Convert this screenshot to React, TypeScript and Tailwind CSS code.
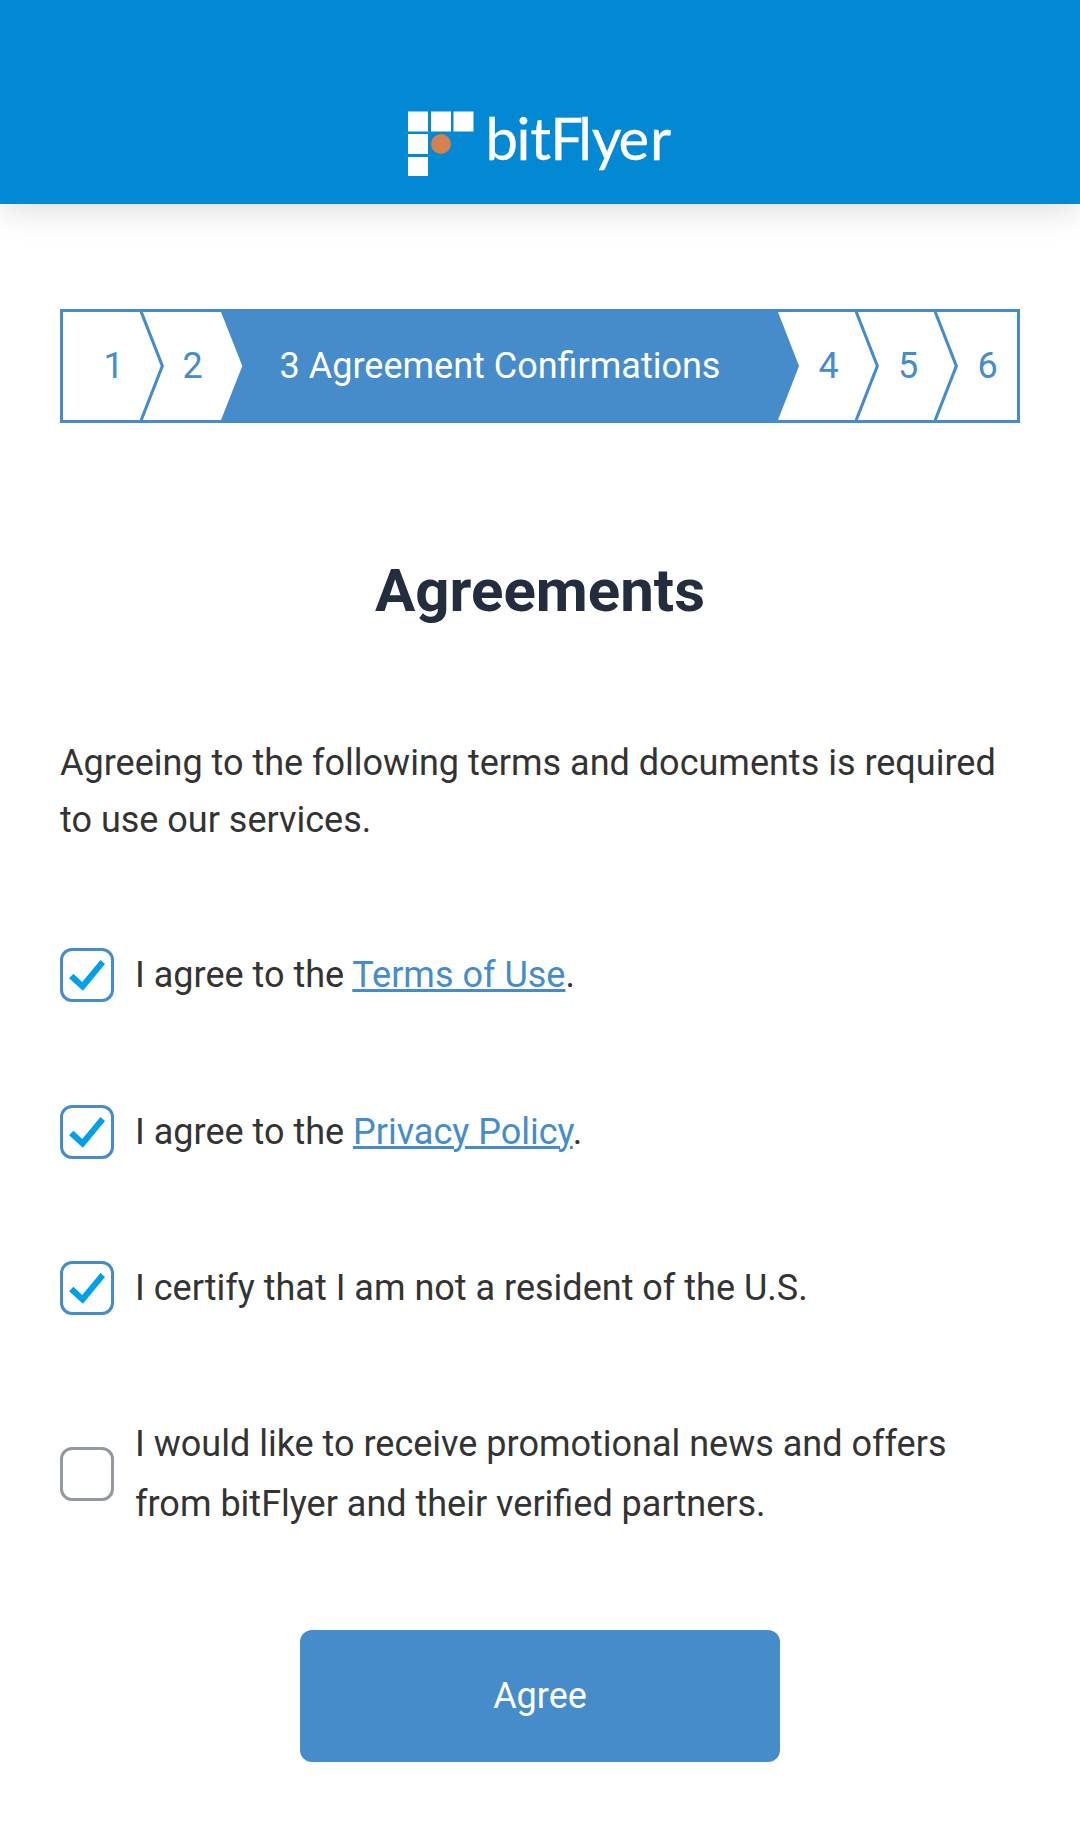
import type { ReactNode } from "react";

function Logo() {
  return (
    <svg width="270" height="72" viewBox="0 0 270 72" role="img" aria-label="bitFlyer" className="overflow-visible">
      <g fill="#fff">
        <rect x="3" y="3.5" width="20" height="20" />
        <rect x="26" y="3.5" width="20" height="20" />
        <rect x="48.5" y="3.5" width="20" height="20" />
        <rect x="3" y="26" width="20" height="20" />
        <rect x="3" y="49" width="20" height="19" />
      </g>
      <circle cx="36" cy="36" r="10" fill="#d5804f" />
      <text
        x="80.5 111.6 125.2 145.2 173.3 186.8 213.4 245"
        y="51.5"
        fontSize="58"
        fill="#fff"
        fontWeight="400"
        stroke="#fff"
        strokeWidth="0.3"
        className="font-['Lato',sans-serif]"
      >
        bitFlyer
      </text>
    </svg>
  );
}

function Divider() {
  return (
    <svg width="24" height="108" viewBox="0 0 24 108" className="shrink-0">
      <path d="M-0.4 0H2.9L24 54L2.9 108H-0.4L20.7 54Z" fill="#468ccb" />
    </svg>
  );
}

function StepNumber({ children, className }: { children: ReactNode; className: string }) {
  return <li className={`flex items-center justify-center ${className}`}>{children}</li>;
}

function Steps() {
  return (
    <ol className="mx-[60px] mt-[105px] flex h-[114px] border-3 border-[#468ccb] text-[#468ccb]">
      <StepNumber className="w-[77px] pl-[24px]">1</StepNumber>
      <Divider />
      <StepNumber className="w-[57px]">2</StepNumber>
      <svg width="22" height="108" viewBox="0 0 22 108" className="shrink-0">
        <path d="M0 0H22V108H0L21.3 54Z" fill="#468ccb" />
      </svg>
      <li className="flex flex-1 items-center bg-[#468ccb] pl-[36.6px] text-white">3 Agreement Confirmations</li>
      <svg width="21" height="108" viewBox="0 0 21 108" className="shrink-0">
        <path d="M0 0L21 54L0 108Z" fill="#468ccb" />
      </svg>
      <StepNumber className="w-[56px] pl-[3px]">4</StepNumber>
      <Divider />
      <StepNumber className="w-[55px] pl-[3px]">5</StepNumber>
      <Divider />
      <StepNumber className="w-[59px]">6</StepNumber>
    </ol>
  );
}

function Option({ checked = false, children }: { checked?: boolean; children: ReactNode }) {
  return (
    <label className="flex items-center gap-[21px]">
      <span
        role="checkbox"
        aria-checked={checked}
        className={`size-[54px] shrink-0 rounded-[12px] border-3 ${checked ? "border-[#468ccb]" : "border-[#9299a1]"}`}
      >
        {checked && (
          <svg width="48" height="48" viewBox="3 3 48 48">
            <path d="M9.1 30.3L13.4 25.8L22.2 34L40.5 12L45 15.9L22.9 42.8Z" fill="#00a0e9" />
          </svg>
        )}
      </span>
      <span className="leading-[60px]">{children}</span>
    </label>
  );
}

function Link({ children }: { children: ReactNode }) {
  return (
    <a href="#" className="text-[#468ccb] underline decoration-3">
      {children}
    </a>
  );
}

export default function App() {
  return (
    <div className="flex h-[1832px] w-[1080px] flex-col overflow-hidden bg-white font-['Roboto',sans-serif] text-[36px] text-[#333]">
      <header className="flex h-[204px] shrink-0 items-end justify-center bg-[#0388d3] pb-[24px] shadow-[0_0_36px_rgba(0,0,0,0.19)]">
        <Logo />
      </header>
      <main className="flex flex-col">
        <Steps />
        <h1 className="mt-[133px] text-center text-[60px] leading-[70px] font-bold text-[#232d3e]">Agreements</h1>
        <p className="mx-[60px] mt-[109px] leading-[57px]">
          Agreeing to the following terms and documents is required to use our services.
        </p>
        <div className="mx-[60px] mt-[96.2px] flex flex-col gap-[96.4px]">
          <Option checked>
            I agree to the <Link>Terms of Use</Link>.
          </Option>
          <Option checked>
            I agree to the <Link>Privacy Policy</Link>.
          </Option>
          <Option checked>I certify that I am not a resident of the U.S.</Option>
          <Option>I would like to receive promotional news and offers from bitFlyer and their verified partners.</Option>
        </div>
        <button className="mx-auto mt-[95.6px] h-[132px] w-[480px] rounded-[12px] bg-[#468ccb] text-white">Agree</button>
      </main>
    </div>
  );
}
